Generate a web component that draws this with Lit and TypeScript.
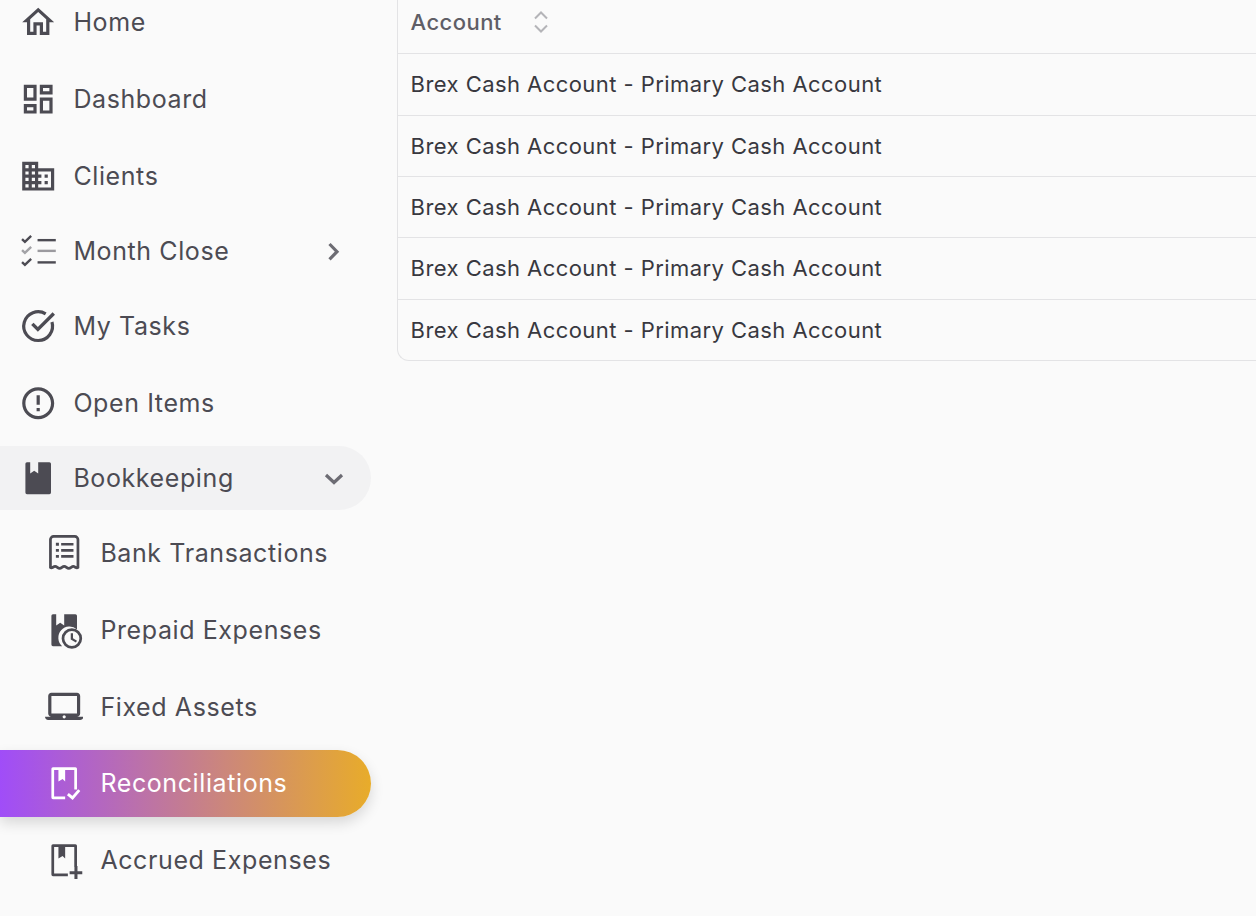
import { LitElement, html, css, svg } from "lit";
import { customElement } from "lit/decorators.js";

const icons: Record<string, unknown> = {
  home: svg`<path d="M12 5.69l5 4.5V18h-2v-6H9v6H7v-7.81l5-4.5M12 3L2 12h3v8h6v-6h2v6h6v-8h3L12 3z"/>`,
  dashboard: svg`<path d="M19 5v2h-4V5h4M9 5v6H5V5h4m10 8v6h-4v-6h4M9 17v2H5v-2h4M21 3h-8v6h8V3zM11 3H3v10h8V3zm10 8h-8v10h8V11zm-10 4H3v6h8v-6z"/>`,
  clients: svg`<path d="M12 7V3H2v18h20V7H12zM6 19H4v-2h2v2zm0-4H4v-2h2v2zm0-4H4V9h2v2zm0-4H4V5h2v2zm4 12H8v-2h2v2zm0-4H8v-2h2v2zm0-4H8V9h2v2zm0-4H8V5h2v2zm10 12h-8v-2h2v-2h-2v-2h2v-2h-2V9h8v10zm-2-8h-2v2h2v-2zm0 4h-2v2h2v-2z"/>`,
  month: svg`<g fill="none" stroke="currentColor" stroke-width="1.5">
    <path d="M1.900 4.400l1.800 1.700 3.900-3.700"/><path d="M1.900 11.300l1.800 1.700 3.900-3.700" opacity=".5"/><path d="M1.900 18.800l1.800 1.700 3.900-3.700"/>
    <path d="M11.600 5.100H23"/><path d="M11.600 11.800H23" opacity=".55"/><path d="M11.600 19H23"/></g>`,
  tasks: svg`<path d="M20.600 9.400A9 9 0 1 1 16.700 4.300" fill="none" stroke="currentColor" stroke-width="2"/><path d="M7.600 11.300l1.500-1.500 2.700 2.700 9.200-9.200 1.500 1.500-10.700 10.700z"/>`,
  open: svg`<path d="M11 15h2v2h-2zm0-8h2v6h-2zm.99-5C6.470 2 2 6.480 2 12s4.470 10 9.990 10C17.520 22 22 17.520 22 12S17.520 2 11.990 2zM12 20c-4.420 0-8-3.580-8-8s3.580-8 8-8 8 3.580 8 8-3.580 8-8 8z"/>`,
  book: svg`<path d="M5 2h2v7l2.500-1.600L12 9V2h7a1 1 0 0 1 1 1v18a1 1 0 0 1-1 1H5a1 1 0 0 1-1-1V3a1 1 0 0 1 1-1z"/>`,
  bank: svg`<g fill="none" stroke="currentColor" stroke-width="1.700"><path d="M3.400 20.900V3.500a2 2 0 0 1 2-2h13.200a2 2 0 0 1 2 2v17.400c-1 .9-1.800-.6-2.900-.6s-1.600 1.200-2.850 1.200-1.600-1.200-2.850-1.200-1.600 1.200-2.850 1.200-1.600-1.200-2.850-1.200-1.900 1.500-2.900.6z"/>
    <path d="M10.100 6.400h7.700M10.100 10.200h7.700M10.100 14h7.700"/></g><path d="M6.800 5.500h1.900v1.800H6.800zM6.800 9.300h1.900v1.800H6.800zM6.800 13.100h1.900v1.800H6.800z"/>`,
  prepaid: svg`<path d="M5 2h2v7l2.500-1.600L12 9V2h7a1 1 0 0 1 1 1v8.500a6.500 6.500 0 0 0-9.300 10.500H5a1 1 0 0 1-1-1V3a1 1 0 0 1 1-1z"/>
    <path fill-rule="evenodd" d="M16.800 10.800a6.400 6.400 0 1 1 0 12.800 6.400 6.400 0 0 1 0-12.800zm0 1.700a4.700 4.700 0 1 0 0 9.400 4.700 4.700 0 0 0 0-9.400z"/><path d="M16.100 13.900h1.400v3.200l2.500 1.500-.7 1.100-3.200-1.900z"/>`,
  laptop: svg`<path d="M20 18c1.100 0 1.990-.9 1.990-2L22 5c0-1.100-.9-2-2-2H4c-1.100 0-2 .9-2 2v11c0 1.100.9 2 2 2H0c0 1.100.9 2 2 2h20c1.100 0 2-.9 2-2h-4zM4 5h16v11H4V5zm8 14c-.55 0-1-.45-1-1s.45-1 1-1 1 .45 1 1-.45 1-1 1z"/>`,
  recon: svg`<path d="M5 2h14a1 1 0 0 1 1 1v13h-1.700V3.700h-5.700V11L11 9.400 8.400 11V3.700H5.700v16.600h6.900V22H5a1 1 0 0 1-1-1V3a1 1 0 0 1 1-1z"/><path fill="none" stroke="currentColor" stroke-width="1.800" d="M14.300 18.800l2.900 2.400 4.200-4.900"/>`,
  accrued: svg`<path d="M5 2h14a1 1 0 0 1 1 1v13h-1.700V3.700h-5.700V11L11 9.400 8.400 11V3.700H5.700v16.600h8.600V22H5a1 1 0 0 1-1-1V3a1 1 0 0 1 1-1z"/><path d="M18.400 15.600h1.900v3.300h3v1.900h-3v3h-1.900v-3h-3v-1.900h3z"/>`,
};

type NavItem = { label: string; icon: string; gap: number; sub?: boolean; chevron?: "right" | "down"; open?: boolean; active?: boolean };

const NAV: NavItem[] = [
  { label: "Home", icon: "home", gap: -10 },
  { label: "Dashboard", icon: "dashboard", gap: 13 },
  { label: "Clients", icon: "clients", gap: 13 },
  { label: "Month Close", icon: "month", gap: 11, chevron: "right" },
  { label: "My Tasks", icon: "tasks", gap: 11 },
  { label: "Open Items", icon: "open", gap: 13 },
  { label: "Bookkeeping", icon: "book", gap: 11, chevron: "down", open: true },
  { label: "Bank Transactions", icon: "bank", gap: 11, sub: true },
  { label: "Prepaid Expenses", icon: "prepaid", gap: 13, sub: true },
  { label: "Fixed Assets", icon: "laptop", gap: 13, sub: true },
  { label: "Reconciliations", icon: "recon", gap: 11, sub: true, active: true },
  { label: "Accrued Expenses", icon: "accrued", gap: 11, sub: true },
];

@customElement("app-root")
export class AppRoot extends LitElement {
  static styles = css`
    :host {
      display: grid;
      grid-template-columns: 397px 1fr;
      height: 916px;
      overflow: hidden;
      background: #fafafa;
      font-family: Inter, "Liberation Sans", sans-serif;
    }
    nav {
      display: flex;
      flex-direction: column;
      width: 371px;
    }
    .item {
      display: flex;
      align-items: center;
      flex: none;
      height: 64px;
      box-sizing: border-box;
      padding: 0 18px 0 19px;
      border-radius: 0 32px 32px 0;
      color: #4c4b53;
      font-size: 25px;
      letter-spacing: 0.6px;
    }
    .item.sub {
      padding-left: 45px;
    }
    .item.open {
      background: #f2f2f3;
    }
    .item.active {
      height: 67px;
      padding-bottom: 1px;
      border-radius: 0 34px 34px 0;
      color: #fff;
      background: linear-gradient(90deg, #a04df8 0%, #e8ac2a 100%);
      box-shadow: 0 6px 14px rgba(0, 0, 0, 0.14);
    }
    .icon {
      width: 38.4px;
      height: 38.4px;
      flex: none;
      fill: currentColor;
    }
    .label {
      margin-left: 16px;
      flex: 1;
      white-space: nowrap;
    }
    .item.sub .label {
      margin-left: 17px;
    }
    .chev {
      width: 38px;
      height: 38px;
      flex: none;
      fill: none;
      stroke: #6d6c73;
      stroke-width: 3.2;
    }
    .table {
      width: 1000px;
      border-left: 1px solid #e3e3e5;
      border-bottom: 1px solid #e3e3e5;
      border-bottom-left-radius: 12px;
      align-self: start;
      box-sizing: border-box;
    }
    .head,
    .row {
      display: flex;
      align-items: center;
      box-sizing: border-box;
      padding-left: 12.6px;
      font-size: 22px;
      letter-spacing: 0.44px;
    }
    .head {
      height: 54.2px;
      padding-bottom: 9px;
      border-bottom: 1px solid #e3e3e5;
      color: #5f5e66;
      font-weight: 500;
    }
    .sort {
      width: 38px;
      height: 38px;
      margin-left: 20px;
      fill: none;
      stroke: #b4b4b8;
      stroke-width: 2;
    }
    .row {
      height: 61.4px;
      padding-bottom: 0.4px;
      border-bottom: 1px solid #e3e3e5;
      color: #38383f;
    }
    .row:last-child {
      border-bottom: none;
      height: 60.4px;
    }
  `;

  renderItem(item: NavItem) {
    const cls = ["item", item.sub ? "sub" : "", item.open ? "open" : "", item.active ? "active" : ""].join(" ");
    return html`
      <div class=${cls} style="margin-top:${item.gap}px">
        <svg class="icon" viewBox="0 0 24 24">${icons[item.icon]}</svg>
        <span class="label">${item.label}</span>
        ${item.chevron === "right"
          ? html`<svg class="chev" viewBox="0 0 38 38"><path d="M14.500 12l7.500 7.700-7.500 7.700"/></svg>`
          : ""}
        ${item.chevron === "down"
          ? html`<svg class="chev" viewBox="0 0 38 38"><path d="M11 16l8 7.500 8-7.500"/></svg>`
          : ""}
      </div>
    `;
  }

  render() {
    return html`
      <nav>${NAV.map((item) => this.renderItem(item))}</nav>
      <div class="table">
        <div class="head">
          Account
          <svg class="sort" viewBox="0 0 38 38"><path d="M13 15.500l6-6 6 6M13 22.500l6 6 6-6"/></svg>
        </div>
        ${[1, 2, 3, 4, 5].map(() => html`<div class="row">Brex Cash Account - Primary Cash Account</div>`)}
      </div>
    `;
  }
}
